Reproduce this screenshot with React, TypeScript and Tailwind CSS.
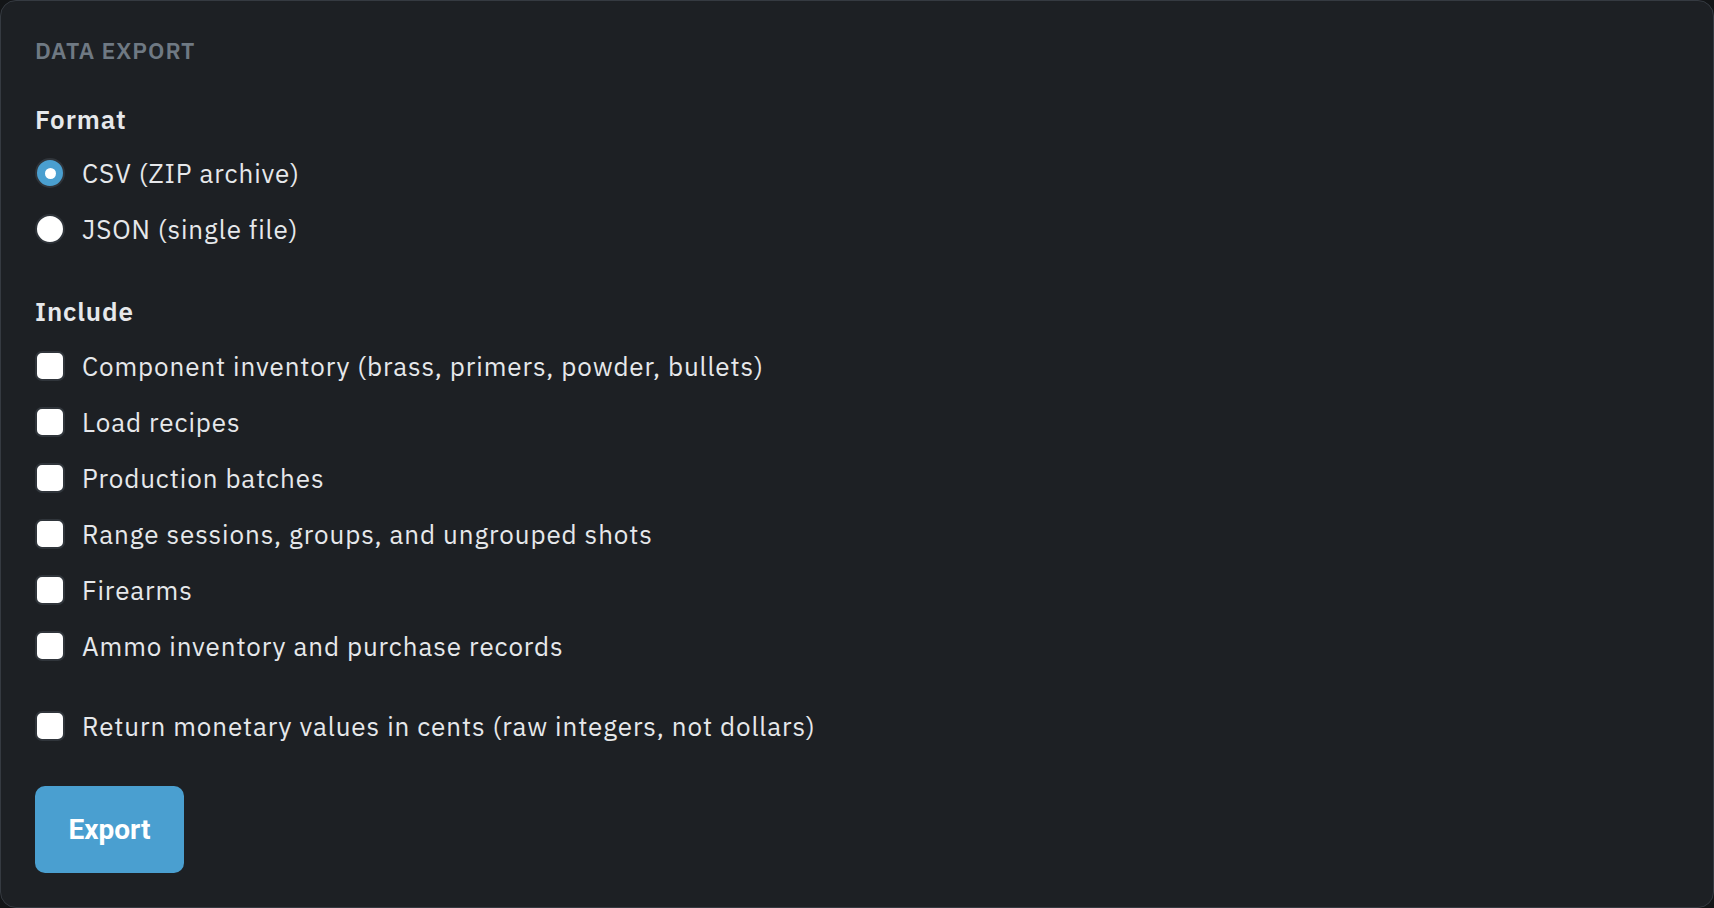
import React from "react";

const includeItems = [
  "Component inventory (brass, primers, powder, bullets)",
  "Load recipes",
  "Production batches",
  "Range sessions, groups, and ungrouped shots",
  "Firearms",
  "Ammo inventory and purchase records",
];

function Radio({ checked, label }: { checked?: boolean; label: string }) {
  return (
    <label className="flex h-[56px] items-center gap-[17px]">
      {checked ? (
        <span className="flex h-[30px] w-[30px] items-center justify-center rounded-full border-2 border-[#30353b] bg-[#4a9fd0]">
          <span className="h-[11px] w-[11px] rounded-full bg-white" />
        </span>
      ) : (
        <span className="h-[30px] w-[30px] rounded-full border-2 border-[#30353b] bg-white" />
      )}
      <span>{label}</span>
    </label>
  );
}

function Check({ label }: { label: string }) {
  return (
    <label className="flex h-[56px] items-center gap-[17px]">
      <span className="h-[30px] w-[30px] rounded-[7px] border-2 border-[#30353b] bg-white" />
      <span>{label}</span>
    </label>
  );
}

export default function App() {
  return (
    <div className="h-[908px] w-full bg-[#131517]">
      <div
        className="flex h-[908px] flex-col rounded-2xl border border-[#353a41] bg-[#1d2024] px-[34px] pt-[33px] text-[26px] leading-[36px] tracking-[0.9px] text-[#e6e8eb]"
        style={{ fontFamily: '"IBM Plex Sans", "Noto Sans", sans-serif' }}
      >
        {/* Header */}
        <div className="text-[23px] font-semibold leading-[32px] tracking-[0.95px] text-[#6f7983]">
          DATA EXPORT
        </div>

        {/* Format */}
        <div className="mt-[35px] font-semibold">Format</div>
        <div className="mt-[8px] flex flex-col">
          <Radio checked label="CSV (ZIP archive)" />
          <Radio label="JSON (single file)" />
        </div>

        {/* Include */}
        <div className="mt-[36px] font-semibold">Include</div>
        <div className="mt-[9px] flex flex-col">
          {includeItems.map((item) => (
            <Check key={item} label={item} />
          ))}
        </div>

        <div className="mt-[24px]">
          <Check label="Return monetary values in cents (raw integers, not dollars)" />
        </div>

        <div className="mt-[32px]">
          <button
            className="flex h-[87px] w-[149px] items-center justify-center rounded-[10px] bg-[#4a9fd0] text-[28px] font-bold tracking-normal text-white"
            style={{ fontFamily: "Roboto, sans-serif" }}
          >
            Export
          </button>
        </div>
      </div>
    </div>
  );
}
